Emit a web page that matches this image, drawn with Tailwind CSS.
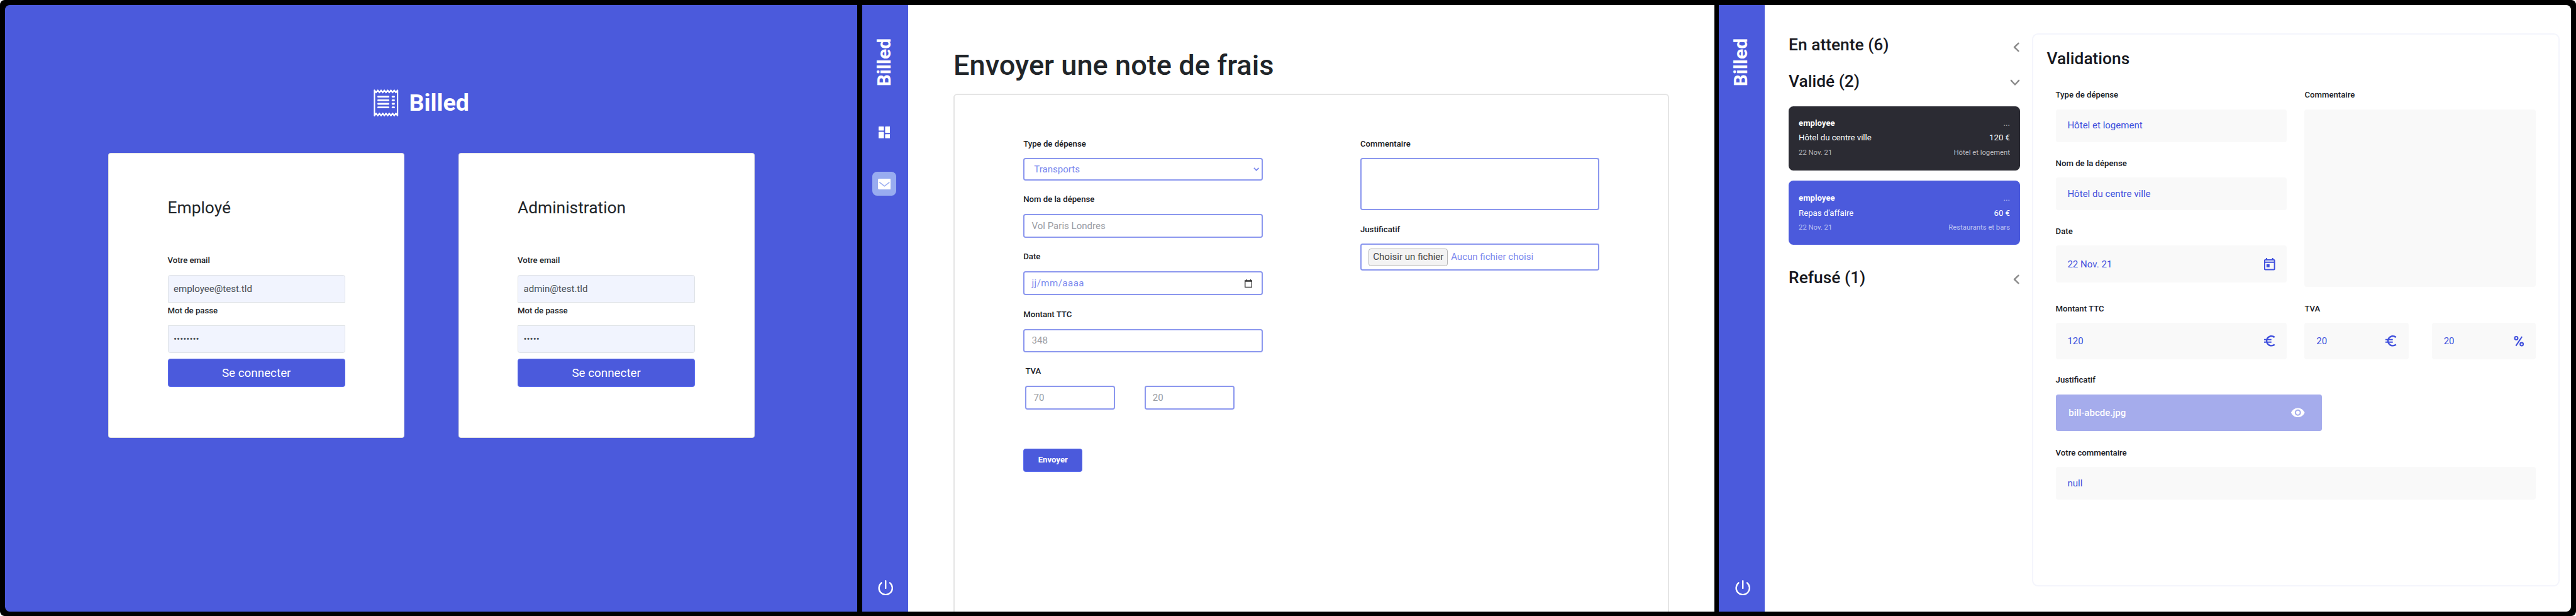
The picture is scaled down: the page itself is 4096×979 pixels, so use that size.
<!DOCTYPE html>
<html lang="fr">
<head>
<meta charset="utf-8">
<title>Billed</title>
<script src="https://cdn.jsdelivr.net/npm/@tailwindcss/browser@4"></script>
</head>
<body class="bg-white overflow-hidden">
<svg class="hidden">
  <symbol id="euro" viewBox="0 0 24 24"><path d="M15 18.5c-2.51 0-4.68-1.42-5.76-3.5H15v-2H8.58c-.05-.33-.08-.66-.08-1s.03-.67.08-1H15V9H9.24C10.32 6.92 12.5 5.5 15 5.5c1.61 0 3.09.59 4.23 1.57L21 5.3C19.41 3.87 17.3 3 15 3c-3.92 0-7.24 2.51-8.48 6H3v2h3.06c-.04.33-.06.66-.06 1s.02.67.06 1H3v2h3.52c1.24 3.49 4.56 6 8.48 6 2.31 0 4.41-.87 6-2.3l-1.78-1.77c-1.13.98-2.6 1.57-4.22 1.57z"/></symbol>
  <symbol id="power" viewBox="0 0 26 26"><path d="M5.8 4.6a11.3 11.3 0 1 0 14.4 0M13 1.3v12.4" fill="none" stroke="currentColor" stroke-width="2.5" stroke-linecap="round"/></symbol>
  <symbol id="chevron-left" viewBox="0 0 12 17"><path d="M10 2 3.2 8.5 10 15" fill="none" stroke="currentColor" stroke-width="2.6" stroke-linecap="round" stroke-linejoin="round"/></symbol>
</svg>
<div class="[zoom:0.94161] w-[4350px] h-[1040px] bg-black rounded-lg p-2 flex gap-2 font-['Roboto',sans-serif] text-[#212529]">

  <!-- Connexion -->
  <section class="w-[1440px] h-[1024px] shrink-0 bg-[#4b5adc] rounded-l-lg">
    <div class="flex items-center justify-center pt-[142px] gap-[18px] text-white w-[1407px]">
      <svg class="w-[42px] h-[48px]" viewBox="0 0 42 48" fill="none" stroke="currentColor">
        <path d="M1.5 2.5 4.3 6.5 7.1 2.5 9.9 6.5 12.7 2.5 15.5 6.5 18.2 2.5 21 6.5 23.8 2.5 26.5 6.5 29.3 2.5 32.1 6.5 34.9 2.5 37.7 6.5 40.5 2.5V45.5L37.7 41.5 34.9 45.5 32.1 41.5 29.3 45.5 26.5 41.5 23.8 45.5 21 41.5 18.2 45.5 15.5 41.5 12.7 45.5 9.9 41.5 7.1 45.5 4.3 41.5 1.5 45.5Z" stroke-width="2.3" stroke-linejoin="round"/>
        <path d="M7.8 13.5h17.4M7.8 19.5h17.4M7.8 25.5h17.4M7.8 31.5h17.4M32 13.5h2.6M32 19.5h2.6M32 25.5h2.6M32 31.5h2.6" stroke-width="3" stroke-linecap="round"/>
      </svg>
      <span class="text-[40px] leading-[48px] font-bold">Billed</span>
    </div>
    <div class="flex gap-[91px] pl-[175px] pt-[60px]">
      <div class="w-[500px] h-[481px] bg-white border border-[#dfdfdf] rounded px-[99px] pt-[66px]">
        <h2 class="text-[28px] leading-[52px]">Employé</h2>
        <div class="mt-[53.5px] text-sm font-medium">Votre email</div>
        <div class="mt-[14px] h-[46px] border border-[#dee2e6] bg-[#f1f4fe] rounded-t px-[9px] flex items-center text-base text-[#495057]">employee@test.tld</div>
        <div class="mt-[5px] text-sm font-medium">Mot de passe</div>
        <div class="mt-[14px] h-[46px] border border-[#dee2e6] bg-[#f1f4fe] rounded-b px-[9px] flex items-center text-base text-[#495057]">••••••••</div>
        <div class="mt-[10px] h-[48px] bg-[#4b5adc] border border-[#5b6df0] rounded text-white text-xl flex items-center justify-center">Se connecter</div>
      </div>
      <div class="w-[500px] h-[481px] bg-white border border-[#dfdfdf] rounded px-[99px] pt-[66px]">
        <h2 class="text-[28px] leading-[52px]">Administration</h2>
        <div class="mt-[53.5px] text-sm font-medium">Votre email</div>
        <div class="mt-[14px] h-[46px] border border-[#dee2e6] bg-[#f1f4fe] rounded-t px-[9px] flex items-center text-base text-[#495057]">admin@test.tld</div>
        <div class="mt-[5px] text-sm font-medium">Mot de passe</div>
        <div class="mt-[14px] h-[46px] border border-[#dee2e6] bg-[#f1f4fe] rounded-b px-[9px] flex items-center text-base text-[#495057]">•••••</div>
        <div class="mt-[10px] h-[48px] bg-[#4b5adc] border border-[#5b6df0] rounded text-white text-xl flex items-center justify-center">Se connecter</div>
      </div>
    </div>
  </section>

  <!-- Nouvelle note de frais -->
  <section class="w-[1439px] h-[1024px] shrink-0 bg-white flex overflow-hidden">
    <nav class="w-[77.5px] shrink-0 bg-[#4b5adc] text-white flex flex-col items-center pt-[56px] pb-[27px]">
      <div class="h-[82px] mr-[3px] [writing-mode:vertical-rl] rotate-180 text-[32px] leading-[32px] font-bold">Billed</div>
      <svg class="w-[20px] h-[20px] mt-[67.5px] mr-[3px]" viewBox="0 0 20 20" fill="currentColor"><rect width="9" height="7" rx="1"/><rect y="9" width="9" height="11" rx="1"/><rect x="11" width="9" height="11" rx="1"/><rect x="11" y="13" width="9" height="7" rx="1"/></svg>
      <div class="w-[40px] h-[40px] mt-[57px] mr-[3px] rounded-lg bg-[#98acf0] flex items-center justify-center">
        <svg class="w-[22px] h-[18px]" viewBox="0 0 22 18"><rect width="22" height="18" rx="2" fill="#fff"/><path d="M2.5 6 11 12.5 19.5 6" fill="none" stroke="#98acf0" stroke-width="1.6"/></svg>
      </div>
      <svg class="w-[26px] h-[26px] mt-auto ml-[2px]"><use href="#power"/></svg>
    </nav>
    <div class="pl-[76.5px] pt-[75px]">
      <h1 class="text-[48px] leading-[56px] font-medium whitespace-nowrap">Envoyer une note de frais</h1>
      <div class="mt-[19.7px] w-[1209px] h-[900px] border-[2.2px] border-[#e5e5e5] rounded-md pl-[116px] pt-[72.3px] flex gap-[165px]">
        <div class="w-[404px]">
          <div class="text-sm font-medium text-[#17191f]">Type de dépense</div>
          <div class="mt-[13.5px] h-[38px] border-[2.2px] border-[#8b97ee] rounded pl-[16px] pr-[3px] flex items-center justify-between text-[#7b88ee]">Transports
            <svg class="w-[10px] h-[6px]" viewBox="0 0 10 6"><path d="M1 1 5 5 9 1" fill="none" stroke="currentColor" stroke-width="1.8"/></svg></div>
          <div class="mt-[23px] text-sm font-medium text-[#17191f]">Nom de la dépense</div>
          <div class="mt-[13.5px] h-[40px] border-[2.2px] border-[#8b97ee] rounded px-[12px] flex items-center text-[#9a9da3]">Vol Paris Londres</div>
          <div class="mt-[23px] text-sm font-medium text-[#17191f]">Date</div>
          <div class="mt-[13.5px] h-[41px] border-[2.2px] border-[#8b97ee] rounded pl-[12px] pr-[15px] flex items-center justify-between text-[#7b88ee] tracking-[0.5px]">jj/mm/aaaa
            <svg class="w-[13px] h-[14px]" viewBox="0 0 13 14"><path d="M.8 2h11.4v11.2H.8zM.8 3.2h11.4M2.9 0v2M10.1 0v2" fill="none" stroke="#333" stroke-width="1.5"/></svg></div>
          <div class="mt-[23px] text-sm font-medium text-[#17191f]">Montant TTC</div>
          <div class="mt-[13.5px] h-[40px] border-[2.2px] border-[#8b97ee] rounded px-[12px] flex items-center text-[#9a9da3]">348</div>
          <div class="mt-[22.5px] pl-[3.5px] text-sm font-medium text-[#17191f]">TVA</div>
          <div class="mt-[13.5px] pl-[3.3px] flex gap-[50.5px]">
            <div class="w-[151.5px] h-[40px] border-[2.2px] border-[#8b97ee] rounded px-[12px] flex items-center text-[#9a9da3]">70</div>
            <div class="w-[151.5px] h-[40px] border-[2.2px] border-[#8b97ee] rounded px-[11px] flex items-center text-[#9a9da3]">20</div>
          </div>
          <div class="mt-[66px] w-[100px] h-[40px] bg-[#4b5adc] border border-[#5b6df0] rounded text-sm font-bold text-white flex items-center justify-center">Envoyer</div>
        </div>
        <div class="w-[404px]">
          <div class="text-sm font-medium text-[#17191f]">Commentaire</div>
          <div class="mt-[13.5px] h-[88px] border-[2.2px] border-[#8b97ee] rounded"></div>
          <div class="mt-[23px] text-sm font-medium text-[#17191f]">Justificatif</div>
          <div class="mt-[13.5px] h-[46px] border-[2.2px] border-[#8b97ee] rounded pl-[12px] flex items-center gap-[5px] text-[#7b88ee]">
            <span class="w-[134px] h-[30px] border-[1.1px] border-[#b5b5b5] bg-[#f3f3f3] rounded-sm text-[#444] flex items-center justify-center whitespace-nowrap">Choisir un fichier</span>Aucun fichier choisi</div>
        </div>
      </div>
    </div>
  </section>

  <!-- Tableau de bord administrateur -->
  <section class="w-[1439px] h-[1024px] shrink-0 bg-white rounded-r-lg flex overflow-hidden">
    <nav class="w-[77.5px] shrink-0 bg-[#4b5adc] text-white flex flex-col items-center pt-[56px] pb-[27px]">
      <div class="h-[82px] mr-[3px] [writing-mode:vertical-rl] rotate-180 text-[32px] leading-[32px] font-bold">Billed</div>
      <svg class="w-[26px] h-[26px] mt-auto ml-[2px]"><use href="#power"/></svg>
    </nav>
    <div class="ml-[40px] w-[390.7px] pt-[52px] shrink-0">
      <div class="flex items-center justify-between h-[32px] pr-[1px] text-[28px] leading-[32px] font-medium text-[#17191f]">En attente (6)<svg class="w-[12px] h-[17px] mt-[7px] text-[#8c8c8c]"><use href="#chevron-left"/></svg></div>
      <div class="mt-[29px] flex items-center justify-between h-[32px] text-[28px] leading-[32px] font-medium text-[#17191f]">Validé (2)<svg class="w-[17px] h-[12px] mt-[5px] text-[#8c8c8c]" viewBox="0 0 17 12"><path d="M2 2 8.5 9 15 2" fill="none" stroke="currentColor" stroke-width="2.6" stroke-linecap="round" stroke-linejoin="round"/></svg></div>
      <div class="mt-[26px] h-[108.7px] rounded-lg bg-[#2b2b33] text-white px-[17px] pt-[18px] text-sm">
        <div class="h-[24.4px] flex justify-between leading-6"><b class="font-bold">employee</b><span class="opacity-60">...</span></div>
        <div class="h-[25px] flex justify-between leading-6"><span>Hôtel du centre ville</span><span>120 €</span></div>
        <div class="flex justify-between text-xs leading-6 text-[#b6b6bb]"><span>22 Nov. 21</span><span>Hôtel et logement</span></div>
      </div>
      <div class="mt-[17px] h-[109px] rounded-lg bg-[#4b5adc] text-white px-[17px] pt-[17.7px] text-sm">
        <div class="h-[26px] flex justify-between leading-6"><b class="font-bold">employee</b><span class="opacity-60">...</span></div>
        <div class="h-[24.7px] flex justify-between leading-6"><span>Repas d'affaire</span><span>60 €</span></div>
        <div class="flex justify-between text-xs leading-6 text-[#bcc2f2]"><span>22 Nov. 21</span><span>Restaurants et bars</span></div>
      </div>
      <div class="mt-[38.7px] flex items-center justify-between h-[32px] pr-[1px] text-[28px] leading-[32px] font-medium text-[#17191f]">Refusé (1)<svg class="w-[12px] h-[17px] mt-[7px] text-[#8c8c8c]"><use href="#chevron-left"/></svg></div>
    </div>
    <div class="ml-[20px] mt-[48.7px] w-[890.9px] h-[933px] shrink-0 border-[2.2px] border-[#f4f5fc] rounded-[10px] pl-[38px] pt-[23.7px] text-[#4050dd]">
      <h2 class="-ml-[15px] text-[28px] leading-[32px] font-medium text-[#17191f]">Validations</h2>
      <div class="mt-[36.8px] flex gap-[30.4px]">
        <div class="w-[390px]">
          <div class="text-sm font-medium text-[#17191f]">Type de dépense</div>
          <div class="mt-[13.3px] h-[55px] bg-[#f9f9f9] rounded px-[20px] flex items-center">Hôtel et logement</div>
          <div class="mt-[26.6px] text-sm font-medium text-[#17191f]">Nom de la dépense</div>
          <div class="mt-[13.5px] h-[55px] bg-[#f9f9f9] rounded px-[20px] flex items-center">Hôtel du centre ville</div>
          <div class="mt-[26.3px] text-sm font-medium text-[#17191f]">Date</div>
          <div class="mt-[13.7px] h-[62.7px] bg-[#f9f9f9] rounded pl-[20px] pr-[16.5px] flex items-center justify-between">22 Nov. 21
            <svg class="w-[25px] h-[25px]" viewBox="0 0 24 24" fill="currentColor"><path d="M19 4h-1V2h-2v2H8V2H6v2H5c-1.1 0-2 .9-2 2v14c0 1.1.9 2 2 2h14c1.1 0 2-.9 2-2V6c0-1.1-.9-2-2-2zm0 16H5V10h14v10zm0-12H5V6h14v2zM7 12h5v5H7z"/></svg></div>
        </div>
        <div class="w-[390px]">
          <div class="text-sm font-medium text-[#17191f]">Commentaire</div>
          <div class="mt-[13.3px] h-[300px] bg-[#f9f9f9] rounded"></div>
        </div>
      </div>
      <div class="mt-[27.2px] flex gap-[30.4px]">
        <div class="w-[390px]">
          <div class="text-sm font-medium text-[#17191f]">Montant TTC</div>
          <div class="mt-[13.2px] h-[61px] bg-[#f9f9f9] rounded pl-[20px] pr-[16.5px] flex items-center justify-between">120<svg class="w-[25px] h-[25px] fill-current"><use href="#euro"/></svg></div>
        </div>
        <div class="w-[390px]">
          <div class="text-sm font-medium text-[#17191f]">TVA</div>
          <div class="mt-[13.2px] flex justify-between">
            <div class="w-[176px] h-[61px] bg-[#f9f9f9] rounded pl-[20px] pr-[17.5px] flex items-center justify-between">20<svg class="w-[25px] h-[25px] fill-current"><use href="#euro"/></svg></div>
            <div class="w-[175px] h-[61px] bg-[#f9f9f9] rounded pl-[20px] pr-[16px] flex items-center justify-between">20<svg class="w-[24px] h-[24px]" viewBox="0 0 24 24" fill="none" stroke="currentColor" stroke-width="2.2"><circle cx="7.4" cy="6.9" r="2.6"/><circle cx="16.6" cy="17.1" r="2.6"/><path d="M17.2 4.2 6.8 19.8"/></svg></div>
          </div>
        </div>
      </div>
      <div class="mt-[26.4px] text-sm font-medium text-[#17191f]">Justificatif</div>
      <div class="mt-[13.5px] w-[450px] h-[62px] bg-[#a5acec] rounded pl-[22px] pr-[28.5px] flex items-center justify-between font-medium text-white">bill-abcde.jpg
        <svg class="w-[25px] h-[25px]" viewBox="0 0 24 24" fill="currentColor"><path d="M12 4.5C7 4.5 2.73 7.61 1 12c1.73 4.39 6 7.5 11 7.5s9.27-3.11 11-7.5c-1.73-4.39-6-7.5-11-7.5zM12 17c-2.76 0-5-2.24-5-5s2.24-5 5-5 5 2.24 5 5-2.24 5-5 5zm0-8c-1.66 0-3 1.34-3 3s1.34 3 3 3 3-1.34 3-3-1.34-3-3-3z"/></svg></div>
      <div class="mt-[27.5px] text-sm font-medium text-[#17191f]">Votre commentaire</div>
      <div class="mt-[13px] w-[810.5px] h-[55px] bg-[#f9f9f9] rounded px-[20px] flex items-center">null</div>
    </div>
  </section>
</div>
</body>
</html>
